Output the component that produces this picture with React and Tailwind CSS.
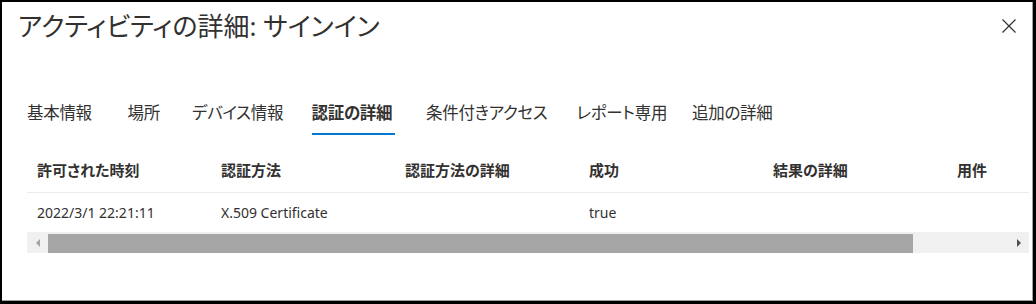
import React from 'react';

const tabs = [
  { label: '基本情報', w: 'w-[69px]' },
  { label: '場所', w: 'w-[33px]' },
  { label: 'デバイス情報', w: 'w-[88px]' },
  { label: '認証の詳細', w: 'w-[83px]' },
  { label: '条件付きアクセス', w: 'w-[119px]' },
  { label: 'レポート専用', w: 'w-[84px]' },
  { label: '追加の詳細', w: 'w-[82px]' },
];
const columns = ['許可された時刻', '認証方法', '認証方法の詳細', '成功', '結果の詳細', '用件'];
const row = ['2022/3/1 22:21:11', 'X.509 Certificate', '', 'true', '', ''];

const App = () => {
  return (
    <div className="w-[1036px] h-[304px] bg-white border-l-2 border-t-2 border-r-[3px] border-b-[3px] border-black font-['Noto_Sans','Noto_Sans_CJK_JP',sans-serif] text-[#323130]">
      <div className="h-full border-r border-b border-[#a0a0a0] flex flex-col">
        {/* Header */}
        <div className="flex items-start justify-between pl-[16px] pr-[16px] pt-[6px]">
          <h1 className="text-[26px] leading-[36px] [font-feature-settings:'palt']">
            アクティビティの詳細: サインイン
          </h1>
          <button className="mt-[11px] p-0">
            <svg width="14" height="14" viewBox="0 0 14 14" className="block">
              <path d="M0.5 0.5 L13.5 13.5 M13.5 0.5 L0.5 13.5" stroke="#323130" strokeWidth="1.2" fill="none" />
            </svg>
          </button>
        </div>

        {/* Tabs */}
        <div className="flex gap-[31.5px] pl-[25px] mt-[49px] text-[16.5px] tracking-[-0.3px] [font-feature-settings:'palt']">
          {tabs.map((t, i) => (
            <div key={t.label} className={`flex flex-col ${t.w}`}>
              <span className={`h-[40px] leading-[40px] whitespace-nowrap ${i === 3 ? 'font-semibold' : ''}`}>{t.label}</span>
              <span className={`h-[2px] ${i === 3 ? 'bg-[#0078d4]' : ''}`} />
            </div>
          ))}
        </div>

        {/* Table */}
        <div className="ml-[25px] mr-[3px] mt-[13px] overflow-hidden">
          <div className="flex h-[45px] items-center border-b border-[#edebe9] text-[15px] font-semibold [font-feature-settings:'palt']">
            {columns.map((c) => (
              <div key={c} className="w-[184px] shrink-0 pl-[10px]">{c}</div>
            ))}
          </div>
          <div className="flex h-[39px] items-center text-[14px]">
            {row.map((c, i) => (
              <div key={i} className="w-[184px] shrink-0 pl-[10px]">{c}</div>
            ))}
          </div>
          <div className="flex h-[21px] bg-[#f0f0f0] items-end">
            <div className="w-[21px] h-full flex items-center justify-center">
              <svg width="4" height="8" viewBox="0 0 4 8"><path d="M4 0 L0 4 L4 8 Z" fill="#a3a3a3" /></svg>
            </div>
            <div className="w-[865px] h-[19px] bg-[#a6a6a6]" />
            <div className="flex-1 h-full flex items-center justify-end pr-[8px]">
              <svg width="4" height="8" viewBox="0 0 4 8"><path d="M0 0 L4 4 L0 8 Z" fill="#505050" /></svg>
            </div>
          </div>
        </div>
      </div>
    </div>
  );
};

export default App;
